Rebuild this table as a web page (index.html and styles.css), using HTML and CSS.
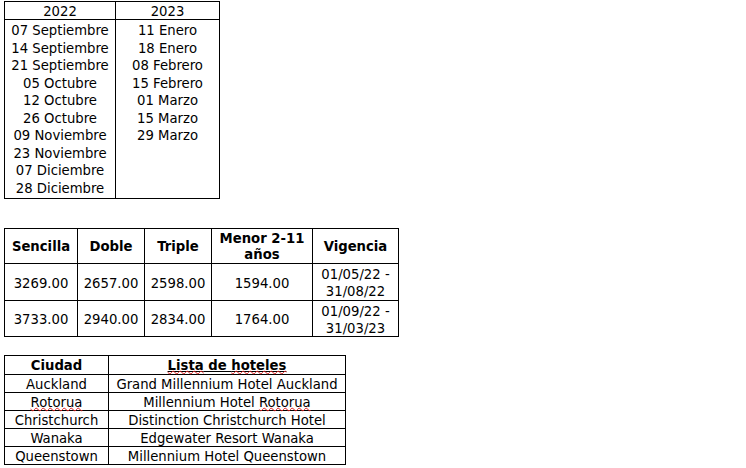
FILE: index.html
```html
<!DOCTYPE html>
<html lang="es">
<head>
<meta charset="utf-8">
<title>Salidas y tarifas</title>
<link rel="stylesheet" href="styles.css">
</head>
<body>
<table class="dates">
  <colgroup><col class="c-a"><col class="c-b"></colgroup>
  <thead>
    <tr><th>2022</th><th>2023</th></tr>
  </thead>
  <tbody>
    <tr>
      <td>07 Septiembre<br>14 Septiembre<br>21 Septiembre<br>05 Octubre<br>12 Octubre<br>26 Octubre<br>09 Noviembre<br>23 Noviembre<br>07 Diciembre<br>28 Diciembre</td>
      <td>11 Enero<br>18 Enero<br>08 Febrero<br>15 Febrero<br>01 Marzo<br>15 Marzo<br>29 Marzo</td>
    </tr>
  </tbody>
</table>

<table class="rates">
  <colgroup><col class="r1"><col class="r2"><col class="r3"><col class="r4"><col class="r5"></colgroup>
  <thead>
    <tr><th>Sencilla</th><th>Doble</th><th>Triple</th><th>Menor 2-11<br>años</th><th>Vigencia</th></tr>
  </thead>
  <tbody>
    <tr class="row-a"><td>3269.00</td><td>2657.00</td><td>2598.00</td><td>1594.00</td><td>01/05/22 -<br>31/08/22</td></tr>
    <tr class="row-b"><td>3733.00</td><td>2940.00</td><td>2834.00</td><td>1764.00</td><td>01/09/22 -<br>31/03/23</td></tr>
  </tbody>
</table>

<table class="hotels">
  <colgroup><col class="h1"><col class="h2"></colgroup>
  <thead>
    <tr><th>Ciudad</th><th><span class="ul"><span class="sp">Lista</span> de <span class="sp">hoteles</span></span></th></tr>
  </thead>
  <tbody>
    <tr><td>Auckland</td><td>Grand Millennium Hotel Auckland</td></tr>
    <tr><td><span class="sp">Rotorua</span></td><td>Millennium Hotel <span class="sp">Rotorua</span></td></tr>
    <tr><td>Christchurch</td><td>Distinction Christchurch Hotel</td></tr>
    <tr><td>Wanaka</td><td>Edgewater Resort Wanaka</td></tr>
    <tr><td>Queenstown</td><td>Millennium Hotel Queenstown</td></tr>
  </tbody>
</table>
</body>
</html>
```

FILE: styles.css
```css
html, body {
  background: #fff;
}
body {
  margin: 0;
  padding: 1px 0 0 4px;
  font-family: "DejaVu Sans Condensed", "DejaVu Sans", sans-serif;
  font-size: 14.7px;
  color: #000;
}
table {
  border-collapse: collapse;
  table-layout: fixed;
}
th, td {
  border: 1px solid #000;
  padding: 0;
  text-align: center;
  vertical-align: middle;
  white-space: nowrap;
}

/* Dates table */
.dates { width: 216px; }
.dates .c-a { width: 111px; }
.dates .c-b { width: 104px; }
.dates th {
  font-weight: normal;
  height: 17px;
  line-height: 17px;
}
.dates td {
  vertical-align: top;
  line-height: 17.5px;
  height: 177px;
  padding-top: 1px;
}

/* Rates table */
.rates {
  margin-top: 29px;
  width: 394px;
}
.rates .r1 { width: 73px; }
.rates .r2 { width: 67px; }
.rates .r3 { width: 67px; }
.rates .r4 { width: 101px; }
.rates .r5 { width: 86px; }
.rates th {
  font-weight: bold;
  height: 34px;
  line-height: 16px;
}
.rates td {
  line-height: 17px;
}
.rates .row-a td { height: 36px; }
.rates .row-b td { height: 35px; }

/* Hotels table */
.hotels {
  margin-top: 18px;
  width: 342px;
}
.hotels .h1 { width: 104px; }
.hotels .h2 { width: 237px; }
.hotels th {
  font-weight: bold;
  height: 18px;
  line-height: 18px;
}
.hotels td {
  height: 17px;
  line-height: 17px;
}
.ul {
  text-decoration: underline;
  text-decoration-thickness: 1px;
  text-underline-offset: 1px;
}
.sp {
  text-decoration: underline wavy #e02020;
  text-decoration-thickness: 1px;
  text-underline-offset: 0;
}
```
